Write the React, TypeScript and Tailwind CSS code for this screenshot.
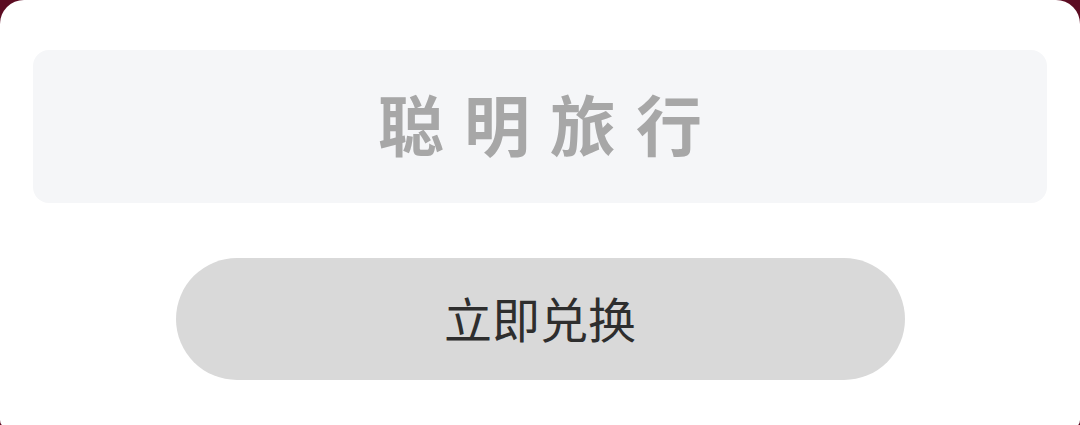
import React from 'react';

export default function App() {
  return (
    <div className="w-[1080px] h-[425px] bg-[#5c0c22] overflow-hidden" style={{ fontFamily: '"Noto Sans CJK SC", "Noto Sans", sans-serif' }}>
      <div className="h-[428px] bg-white rounded-t-[24px] rounded-b-[8px] px-[33px] pt-[50px] flex flex-col items-center">
        <div className="w-full h-[153px] bg-[#f5f6f8] rounded-[16px] flex items-center justify-center pb-[8px]">
          <span className="text-[66px] font-semibold text-[#a7a7a7] tracking-[20px] pl-[20px]">聪明旅行</span>
        </div>
        <button className="mt-[55px] w-[729px] h-[122px] rounded-full bg-[#d9d9d9] text-[48px] text-[#2e2e2e] flex items-center justify-center pb-[4px]">
          立即兑换
        </button>
      </div>
    </div>
  );
}
